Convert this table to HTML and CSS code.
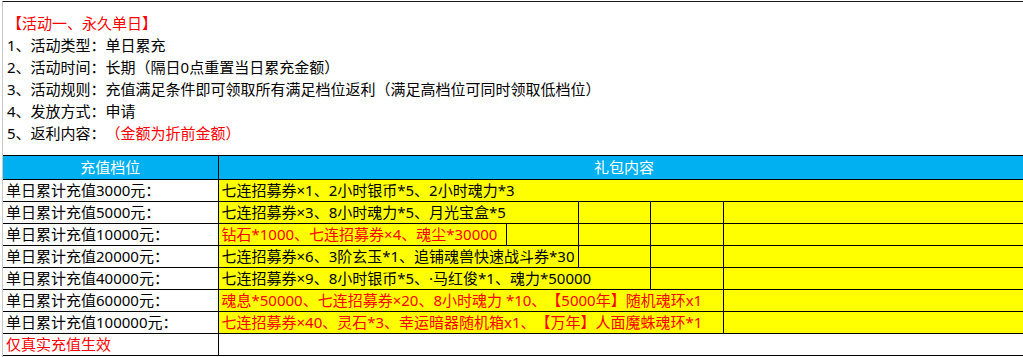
FILE: index.html
```html
<!DOCTYPE html>
<html lang="zh-CN">
<head>
<meta charset="utf-8">
<title>活动一、永久单日</title>
<link rel="stylesheet" href="styles.css">
</head>
<body>
<div class="sheet">
  <div class="intro">
    <div class="line red">【活动一、永久单日】</div>
    <div class="line">1、活动类型：单日累充</div>
    <div class="line">2、活动时间：长期（隔日0点重置当日累充金额）</div>
    <div class="line">3、活动规则：充值满足条件即可领取所有满足档位返利（满足高档位可同时领取低档位）</div>
    <div class="line">4、发放方式：申请</div>
    <div class="line">5、返利内容：<span class="red">（金额为折前金额）</span></div>
  </div>
  <table class="grid">
    <colgroup>
      <col class="c-tier">
      <col class="c-a">
      <col class="c-b">
      <col class="c-c">
      <col class="c-d">
      <col class="c-e">
    </colgroup>
    <tr class="head">
      <td>充值档位</td>
      <td colspan="5">礼包内容</td>
    </tr>
    <tr>
      <td class="tier">单日累计充值3000元：</td>
      <td class="gift" colspan="5">七连招募券×1、2小时银币*5、2小时魂力*3</td>
    </tr>
    <tr>
      <td class="tier">单日累计充值5000元：</td>
      <td class="gift" colspan="2">七连招募券×3、8小时魂力*5、月光宝盒*5</td>
      <td class="gift"></td>
      <td class="gift"></td>
      <td class="gift"></td>
    </tr>
    <tr>
      <td class="tier">单日累计充值10000元：</td>
      <td class="gift red">钻石*1000、七连招募券×4、魂尘*30000</td>
      <td class="gift"></td>
      <td class="gift"></td>
      <td class="gift"></td>
      <td class="gift"></td>
    </tr>
    <tr>
      <td class="tier">单日累计充值20000元：</td>
      <td class="gift" colspan="2">七连招募券×6、3阶玄玉*1、追铺魂兽快速战斗券*30</td>
      <td class="gift"></td>
      <td class="gift"></td>
      <td class="gift"></td>
    </tr>
    <tr>
      <td class="tier">单日累计充值40000元：</td>
      <td class="gift" colspan="3">七连招募券×9、8小时银币*5、·马红俊*1、魂力*50000</td>
      <td class="gift"></td>
      <td class="gift"></td>
    </tr>
    <tr>
      <td class="tier">单日累计充值60000元：</td>
      <td class="gift red" colspan="4">魂息*50000、七连招募券×20、8小时魂力 *10、【5000年】随机魂环x1</td>
      <td class="gift"></td>
    </tr>
    <tr>
      <td class="tier">单日累计充值100000元：</td>
      <td class="gift red" colspan="4">七连招募券×40、灵石*3、幸运暗器随机箱x1、【万年】人面魔蛛魂环*1</td>
      <td class="gift"></td>
    </tr>
    <tr>
      <td class="tier red">仅真实充值生效</td>
      <td colspan="5"></td>
    </tr>
  </table>
</div>
</body>
</html>
```

FILE: styles.css
```css
html, body {
  margin: 0;
  padding: 0;
  background: #ffffff;
  overflow: hidden;
}

body {
  width: 1023px;
  height: 357px;
  font-family: "Noto Sans", "Noto Sans CJK SC", sans-serif;
  font-size: 15px;
  color: #000000;
  text-spacing-trim: space-all;
}

.sheet {
  margin: 1px 0 0 2px;
  border-top: 1px solid #1a1a1a;
  border-left: 1px solid #c8c8c8;
  height: 360px;
  width: 1060px;
}

.intro {
  padding: 10px 0 0 4px;
  height: 143px;
  box-sizing: border-box;
}

.line {
  height: 22px;
  line-height: 22px;
  white-space: nowrap;
}

.red {
  color: #ff0000;
}

.grid {
  margin-top: 10px;
  border-collapse: collapse;
  table-layout: fixed;
  width: 1027px;
}

.c-tier { width: 215px; }
.c-a { width: 288px; }
.c-b { width: 72px; }
.c-c { width: 72px; }
.c-d { width: 73px; }
.c-e { width: 307px; }

.grid td {
  height: 21px;
  padding: 0 3px;
  line-height: 21px;
  border: 1px solid #000000;
  white-space: nowrap;
  overflow: visible;
  vertical-align: middle;
}

.grid td:first-child {
  border-left: none;
}

.grid tr.head td {
  height: 23px;
  background: #00b0f0;
  color: #ffffff;
  text-align: center;
}

.grid td.gift {
  background: #ffff00;
}
```
